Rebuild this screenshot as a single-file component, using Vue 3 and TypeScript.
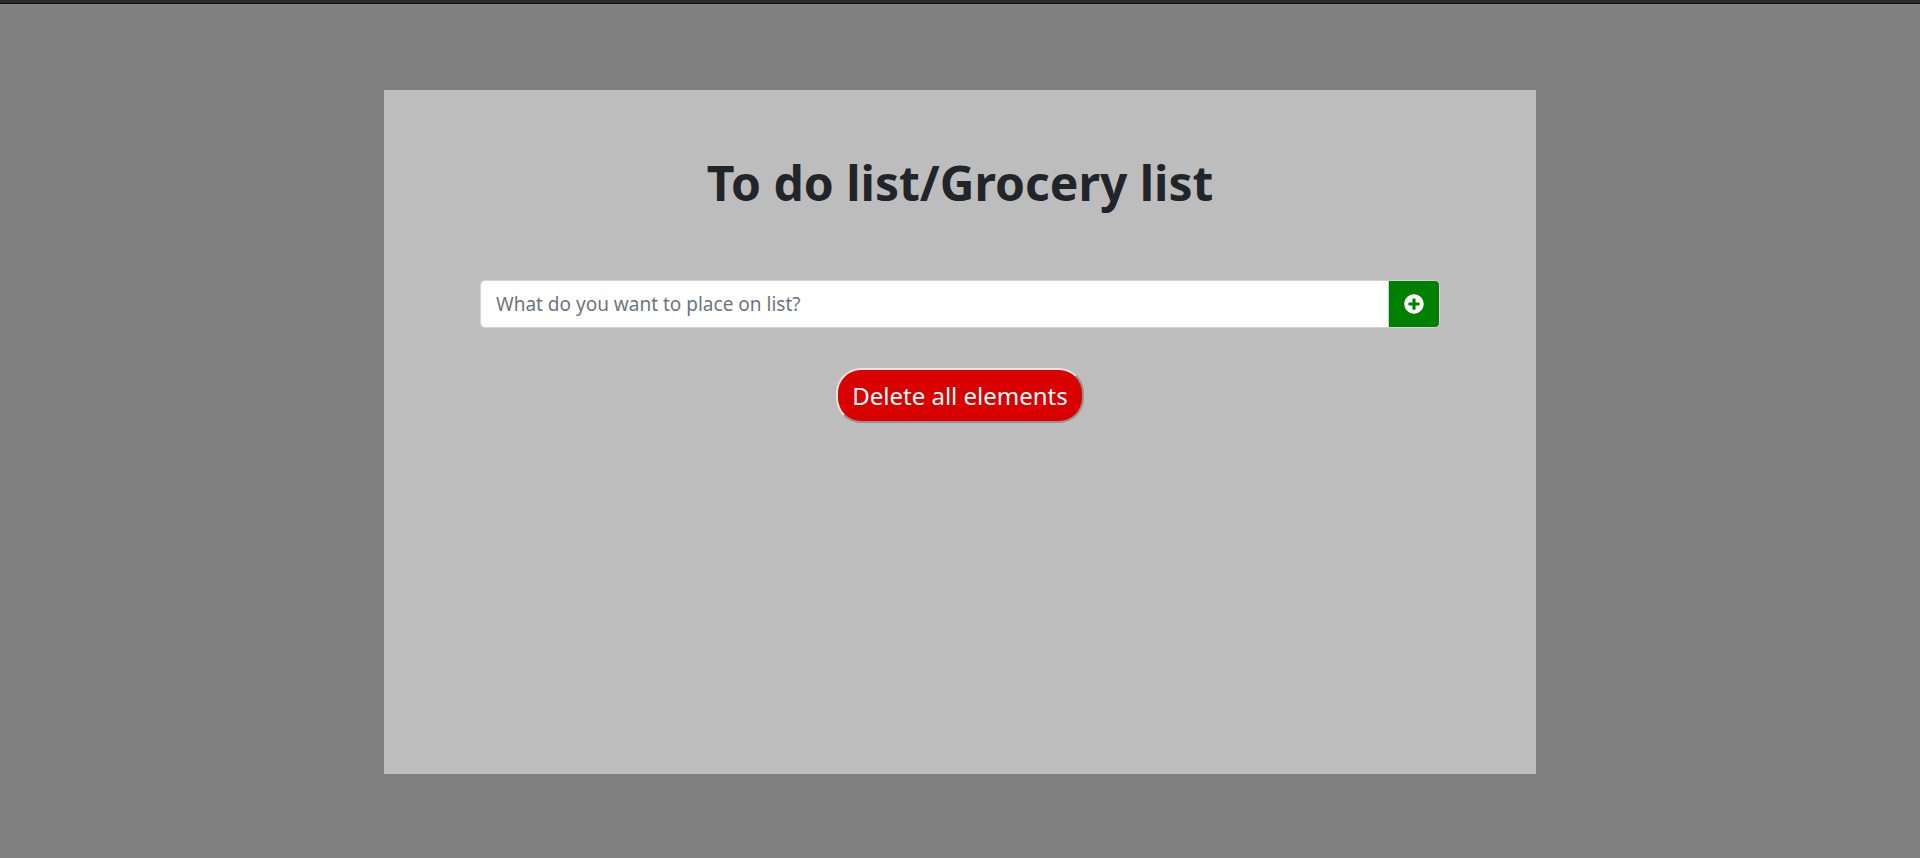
<script setup lang="ts">
import { ref } from 'vue'

const entry = ref('')
const items = ref<string[]>([])

function addItem(): void {
  const text = entry.value.trim()
  if (!text) return
  items.value.push(text)
  entry.value = ''
}

function clearItems(): void {
  items.value = []
}
</script>

<template>
  <div class="page">
    <div class="strip"></div>
    <main class="backdrop">
      <section class="card">
        <h1 class="title">To do list/Grocery list</h1>
        <form class="entry" @submit.prevent="addItem">
          <input
            v-model="entry"
            class="field"
            type="text"
            aria-label="What do you want to place on list?"
            placeholder="What do you want to place on list?"
          />
          <button class="add" type="submit" aria-label="Add">
            <svg class="icon" viewBox="0 0 512 512" aria-hidden="true">
              <path
                fill="currentColor"
                d="M256 8C119 8 8 119 8 256s111 248 248 248 248-111 248-248S393 8 256 8zm144 276c0 6.600-5.400 12-12 12h-92v92c0 6.600-5.400 12-12 12h-56c-6.600 0-12-5.400-12-12v-92h-92c-6.600 0-12-5.400-12-12v-56c0-6.600 5.400-12 12-12h92v-92c0-6.600 5.400-12 12-12h56c6.600 0 12 5.400 12 12v92h92c6.600 0 12 5.400 12 12v56z"
              />
            </svg>
          </button>
        </form>
        <ul v-if="items.length" class="items">
          <li v-for="(item, index) in items" :key="index">{{ item }}</li>
        </ul>
        <button class="clear" type="button" @click="clearItems">Delete all elements</button>
      </section>
    </main>
  </div>
</template>

<style>
body {
  margin: 0;
  background: #808080;
}
</style>

<style scoped>
.page {
  display: flex;
  flex-direction: column;
  min-height: 100vh;
  font-family: "Segoe UI", "Noto Sans", "Open Sans", sans-serif;
  color: #212529;
}

.strip {
  height: 3px;
  background: #2b2a33;
  border-bottom: 1px solid #0c0c0d;
}

.backdrop {
  flex: 1;
  display: grid;
  grid-template-rows: 1fr;
  padding: 86px 0 84px;
  background: #808080;
}

.card {
  box-sizing: border-box;
  width: 60%;
  margin: 0 auto;
  padding: 63px 5% 40px;
  display: flex;
  flex-direction: column;
  align-items: center;
  background: #bdbdbd;
}

.title {
  margin: 0 0 67px;
  font-size: 48px;
  line-height: 60px;
  font-weight: 700;
  text-align: center;
}

.entry {
  display: flex;
  width: 100%;
}

.field {
  flex: 1;
  min-width: 0;
  box-sizing: border-box;
  height: 48px;
  padding: 0 15px;
  border: 1px solid #ced4da;
  border-radius: 5px 0 0 5px;
  background: #fff;
  color: #495057;
  font: inherit;
  font-size: 19px;
}

.field::placeholder {
  color: #6c757d;
  opacity: 1;
}

.add {
  display: flex;
  align-items: center;
  justify-content: center;
  box-sizing: border-box;
  width: 52px;
  margin-left: -1px;
  padding: 0;
  border: 1px solid #ced4da;
  border-radius: 0 5px 5px 0;
  background: #008000;
  color: #fff;
}

.icon {
  width: 20px;
  height: 20px;
}

.items {
  width: 100%;
  margin: 24px 0 0;
  font-size: 19px;
}

.clear {
  margin-top: 40px;
  padding: 6px 14px;
  border: 2px outset #e6e6e6;
  border-radius: 25px;
  background: #d90000;
  color: #fff;
  font: inherit;
  font-size: 24px;
  line-height: 39px;
}
</style>
